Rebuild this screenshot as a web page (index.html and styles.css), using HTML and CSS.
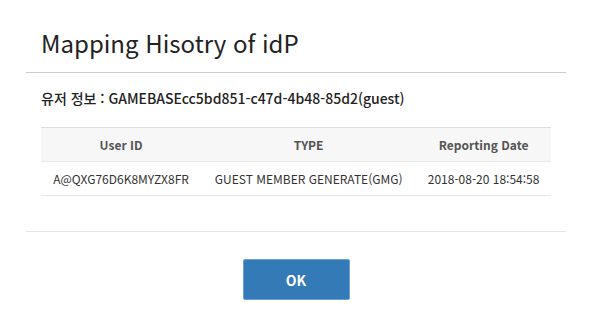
FILE: index.html
```html
<!DOCTYPE html>
<html lang="ko">
<head>
  <meta charset="UTF-8" />
  <title>Mapping Hisotry of idP</title>
  <link rel="stylesheet" href="styles.css">
</head>
<body>
  <div class="modal">
    <div class="modal-header">
      <h1>Mapping Hisotry of idP</h1>
    </div>
    <div class="modal-body">
      <p class="user-info">유저 정보 : GAMEBASEcc5bd851-c47d-4b48-85d2(guest)</p>
      <table class="history-table">
        <thead>
          <tr>
            <th>User ID</th>
            <th>TYPE</th>
            <th>Reporting Date</th>
          </tr>
        </thead>
        <tbody>
          <tr>
            <td>A@QXG76D6K8MYZX8FR</td>
            <td>GUEST MEMBER GENERATE(GMG)</td>
            <td>2018-08-20 18:54:58</td>
          </tr>
        </tbody>
      </table>
    </div>
    <div class="modal-footer">
      <button class="ok-btn">OK</button>
    </div>
  </div>
</body>
</html>
```

FILE: styles.css
```css
body {
  margin: 0;
  padding: 0;
  font-family: 'Noto Sans CJK KR', sans-serif;
  background-color: #fff;
  color: #333;
}

.modal {
  width: 540px;
  margin-left: 26px;
}

.modal-header {
  padding: 28px 15px 14px;
  border-bottom: 1px solid #cccccc;
}

.modal-header h1 {
  margin: 0;
  font-size: 24px;
  font-weight: 400;
  line-height: 30px;
  color: #222;
}

.modal-body {
  padding: 15px 15px 35px;
}

.user-info {
  margin: 0 0 19px;
  font-size: 14px;
  font-weight: 500;
  line-height: 20px;
  color: #222;
}

.history-table {
  width: 100%;
  border-collapse: collapse;
  font-size: 12px;
}

.history-table th {
  height: 33px;
  padding: 0 8px;
  background: #f7f7f7;
  color: #555;
  font-weight: 700;
  border-top: 1px solid #dddddd;
  border-bottom: 1px solid #e9e9e9;
}

.history-table td {
  height: 33px;
  padding: 0 8px;
  text-align: center;
  color: #333;
  border-bottom: 1px solid #e5e5e5;
}

.modal-footer {
  padding: 27px 15px 30px;
  border-top: 1px solid #e5e5e5;
  text-align: center;
}

.ok-btn {
  width: 107px;
  height: 41px;
  background-color: #337ab7;
  color: #fff;
  border: 1px solid #6a9fe0;
  border-radius: 2px;
  font-family: 'Noto Sans CJK KR', sans-serif;
  font-size: 14px;
  font-weight: 700;
  cursor: pointer;
}
```
